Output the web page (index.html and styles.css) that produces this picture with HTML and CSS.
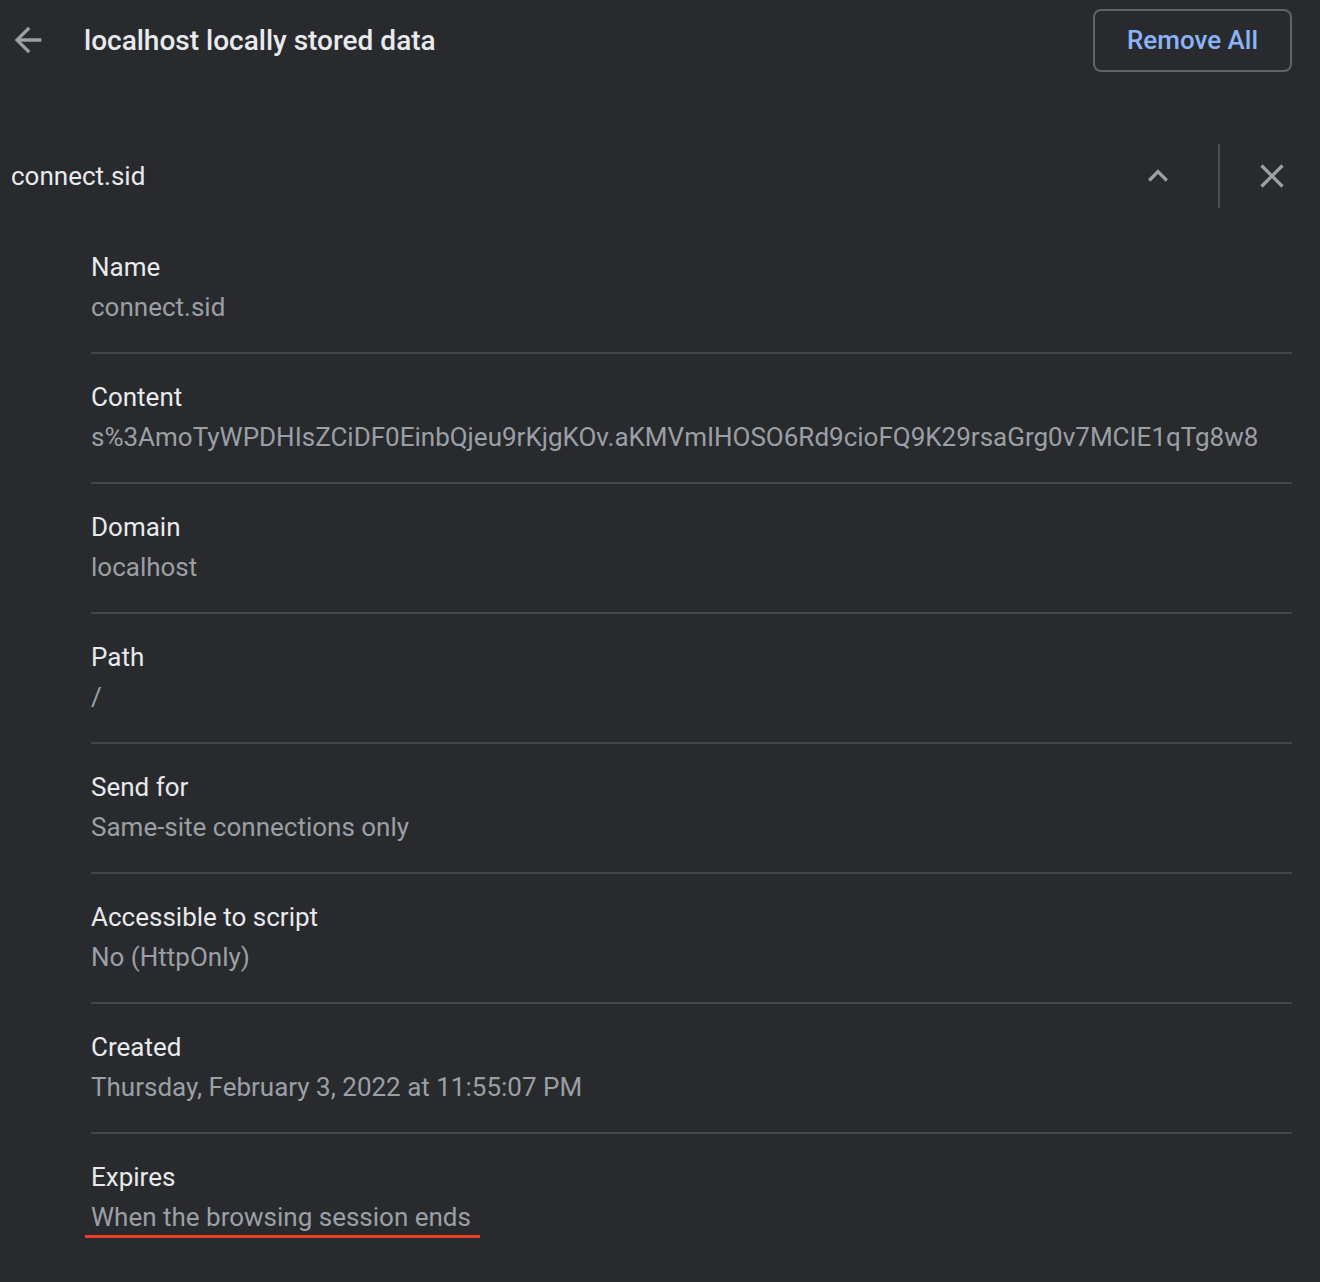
FILE: index.html
```html
<!DOCTYPE html>
<html>
<head>
<meta charset="utf-8">
<title>localhost locally stored data</title>
<link rel="stylesheet" href="styles.css">
</head>
<body>

<div class="page">
    <div class="header">
        <div class="back-button">
            <svg viewBox="0 0 24 24" width="40" height="40"><path d="M20 11H7.83l5.59-5.59L12 4l-8 8 8 8 1.41-1.41L7.83 13H20v-2z"/></svg>
        </div>
        <h1 class="title">localhost locally stored data</h1>
        <div class="remove-all">Remove All</div>
    </div>

    <div class="cookie-header">
        <div class="cookie-name">connect.sid</div>
        <div class="icon-button">
            <svg viewBox="0 0 24 24" width="40" height="40"><path d="M12 8l-6 6 1.41 1.41L12 10.83l4.59 4.58L18 14z"/></svg>
        </div>
        <div class="separator"></div>
        <div class="icon-button">
            <svg viewBox="0 0 24 24" width="40" height="40"><path d="M19 6.41L17.590 5 12 10.59 6.41 5 5 6.41 10.59 12 5 17.59 6.41 19 12 13.41 17.59 19 19 17.59 13.41 12z"/></svg>
        </div>
    </div>

    <div class="details">
        <div class="row">
            <div class="label">Name</div>
            <div class="value">connect.sid</div>
        </div>
        <div class="row">
            <div class="label">Content</div>
            <div class="value">s%3AmoTyWPDHIsZCiDF0EinbQjeu9rKjgKOv.aKMVmIHOSO6Rd9cioFQ9K29rsaGrg0v7MCIE1qTg8w8</div>
        </div>
        <div class="row">
            <div class="label">Domain</div>
            <div class="value">localhost</div>
        </div>
        <div class="row">
            <div class="label">Path</div>
            <div class="value">/</div>
        </div>
        <div class="row">
            <div class="label">Send for</div>
            <div class="value">Same-site connections only</div>
        </div>
        <div class="row">
            <div class="label">Accessible to script</div>
            <div class="value">No (HttpOnly)</div>
        </div>
        <div class="row">
            <div class="label">Created</div>
            <div class="value">Thursday, February 3, 2022 at 11:55:07 PM</div>
        </div>
        <div class="row last">
            <div class="label">Expires</div>
            <div class="value"><span class="marked">When the browsing session ends</span></div>
        </div>
    </div>
</div>

</body>
</html>
```

FILE: styles.css
```css
html, body {
    margin: 0;
    padding: 0;
}

body {
    background-color: #292a2d;
    font-family: Roboto, "Liberation Sans", sans-serif;
    font-size: 26px;
    color: #e8eaed;
    width: 1320px;
    height: 1282px;
    overflow: hidden;
}

.page {
    padding-right: 28px;
}

/* top bar */

.header {
    display: flex;
    align-items: center;
    height: 80px;
}

.back-button {
    width: 40px;
    height: 40px;
    margin-left: 8px;
    fill: #9aa0a6;
}

.back-button svg {
    display: block;
}

.title {
    flex: 1;
    margin: 0 0 0 36px;
    font-size: 28px;
    font-weight: 500;
    color: #e8eaed;
}

.remove-all {
    box-sizing: border-box;
    width: 199px;
    height: 63px;
    border: 2px solid #5f6368;
    border-radius: 8px;
    color: #8ab4f8;
    font-weight: 500;
    font-size: 26px;
    display: flex;
    align-items: center;
    justify-content: center;
}

/* cookie row */

.cookie-header {
    display: flex;
    align-items: center;
    height: 64px;
    margin-top: 64px;
}

.cookie-name {
    flex: 1;
    padding-left: 11px;
    color: #e8eaed;
}

.icon-button {
    width: 40px;
    height: 40px;
    fill: #9aa0a6;
}

.icon-button svg {
    display: block;
}

.separator {
    width: 2px;
    height: 64px;
    background-color: #4a4b4e;
    margin: 0 32px 0 40px;
}

/* details */

.details {
    padding: 16px 0 0 91px;
}

.row {
    padding: 23px 0 25px;
    border-bottom: 2px solid #444548;
}

.row.last {
    border-bottom: none;
}

.label,
.value {
    line-height: 40px;
    white-space: nowrap;
}

.label {
    color: #e8eaed;
}

.value {
    color: #9aa0a6;
}

.marked {
    position: relative;
}

.marked::after {
    content: "";
    position: absolute;
    left: -6px;
    right: -9px;
    bottom: -6px;
    height: 3px;
    background-color: #ea3f2b;
}
```
